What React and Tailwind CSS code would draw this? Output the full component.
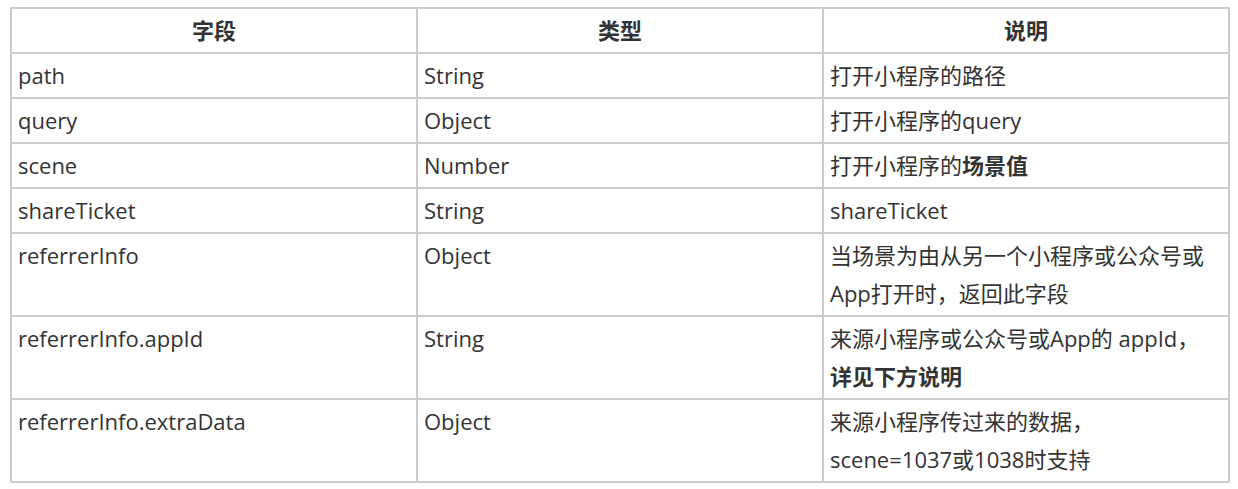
const rows = [
  { field: 'path', type: 'String', desc: <>打开小程序的路径</> },
  { field: 'query', type: 'Object', desc: <>打开小程序的query</> },
  { field: 'scene', type: 'Number', desc: <>打开小程序的<b className="font-bold">场景值</b></> },
  { field: 'shareTicket', type: 'String', desc: <>shareTicket</> },
  { field: 'referrerInfo', type: 'Object', desc: <>当场景为由从另一个小程序或公众号或<br />App打开时，返回此字段</> },
  {
    field: 'referrerInfo.appId',
    type: 'String',
    desc: <>来源小程序或公众号或App的 appId，<br /><b className="font-bold">详见下方说明</b></>,
  },
  { field: 'referrerInfo.extraData', type: 'Object', desc: <>来源小程序传过来的数据，<br />scene=1037或1038时支持</> },
];

export default function App() {
  return (
    <div
      className="bg-white pl-[10px] pr-[8px] pt-[7px] pb-[6px] text-[#333] text-[22px] leading-[38px]"
      style={{ fontFamily: '"Open Sans", "Noto Sans CJK SC", sans-serif' }}
    >
      <table className="w-full table-fixed border-collapse border-2 border-[#cccccc]">
        <thead>
          <tr>
            <th className="border-2 border-[#cccccc] h-[45px] px-[6px] pb-[1px] font-bold text-center">字段</th>
            <th className="border-2 border-[#cccccc] h-[45px] px-[6px] pb-[1px] font-bold text-center">类型</th>
            <th className="border-2 border-[#cccccc] h-[45px] px-[6px] pb-[1px] font-bold text-center">说明</th>
          </tr>
        </thead>
        <tbody>
          {rows.map((r) => (
            <tr key={r.field}>
              <td className="border-2 border-[#cccccc] px-[6px] pt-[2px] pb-[3px] align-top">{r.field}</td>
              <td className="border-2 border-[#cccccc] px-[6px] pt-[2px] pb-[3px] align-top">{r.type}</td>
              <td className="border-2 border-[#cccccc] px-[6px] pt-[2px] pb-[3px] align-top whitespace-nowrap">{r.desc}</td>
            </tr>
          ))}
        </tbody>
      </table>
    </div>
  );
}
